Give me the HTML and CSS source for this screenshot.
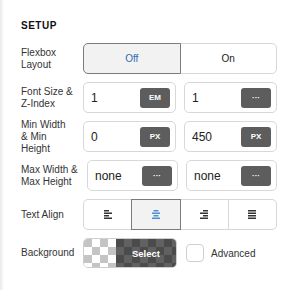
FILE: index.html
```html
<!DOCTYPE html>
<html lang="en">
<head>
    <meta charset="UTF-8">
    <meta name="viewport" content="width=device-width, initial-scale=1.0">
    <title>Setup</title>
    <link rel="stylesheet" href="styles.css">
</head>
<body>
    <div class="panel">
        <h2 class="section-title">Setup</h2>

        <div class="row">
            <div class="label">Flexbox Layout</div>
            <div class="segmented">
                <button class="seg active">Off</button>
                <button class="seg">On</button>
            </div>
        </div>

        <div class="row">
            <div class="label">Font Size &amp; Z-Index</div>
            <div class="fields">
                <div class="field"><span class="value">1</span><span class="unit">EM</span></div>
                <div class="field"><span class="value">1</span><span class="unit">&middot;&middot;&middot;</span></div>
            </div>
        </div>

        <div class="row">
            <div class="label">Min Width &amp; Min Height</div>
            <div class="fields">
                <div class="field"><span class="value">0</span><span class="unit">PX</span></div>
                <div class="field"><span class="value">450</span><span class="unit">PX</span></div>
            </div>
        </div>

        <div class="row">
            <div class="label label-wide">Max Width &amp; Max Height</div>
            <div class="fields">
                <div class="field"><span class="value">none</span><span class="unit">&middot;&middot;&middot;</span></div>
                <div class="field"><span class="value">none</span><span class="unit">&middot;&middot;&middot;</span></div>
            </div>
        </div>

        <div class="row">
            <div class="label">Text Align</div>
            <div class="segmented">
                <button class="seg">
                    <svg class="align-icon" width="8" height="9" viewBox="0 0 8 9">
                        <rect x="0" y="0" width="5" height="1.5"/>
                        <rect x="0" y="2.5" width="8" height="1.5"/>
                        <rect x="0" y="5" width="5" height="1.5"/>
                        <rect x="0" y="7.5" width="8" height="1.5"/>
                    </svg>
                </button>
                <button class="seg active">
                    <svg class="align-icon" width="8" height="9" viewBox="0 0 8 9">
                        <rect x="1.5" y="0" width="5" height="1.5"/>
                        <rect x="0" y="2.5" width="8" height="1.5"/>
                        <rect x="1.5" y="5" width="5" height="1.5"/>
                        <rect x="0" y="7.5" width="8" height="1.5"/>
                    </svg>
                </button>
                <button class="seg">
                    <svg class="align-icon" width="8" height="9" viewBox="0 0 8 9">
                        <rect x="3" y="0" width="5" height="1.5"/>
                        <rect x="0" y="2.5" width="8" height="1.5"/>
                        <rect x="3" y="5" width="5" height="1.5"/>
                        <rect x="0" y="7.5" width="8" height="1.5"/>
                    </svg>
                </button>
                <button class="seg">
                    <svg class="align-icon" width="8" height="9" viewBox="0 0 8 9">
                        <rect x="0" y="0" width="8" height="1.5"/>
                        <rect x="0" y="2.5" width="8" height="1.5"/>
                        <rect x="0" y="5" width="8" height="1.5"/>
                        <rect x="0" y="7.5" width="8" height="1.5"/>
                    </svg>
                </button>
            </div>
        </div>

        <div class="row row-last">
            <div class="label">Background</div>
            <div class="fields">
                <div class="bg-picker">
                    <div class="bg-preview"></div>
                    <div class="bg-select">Select</div>
                </div>
                <label class="advanced">
                    <span class="checkbox"></span>
                    <span>Advanced</span>
                </label>
            </div>
        </div>
    </div>
</body>
</html>
```

FILE: styles.css
```css
body {
    margin: 0;
    font-family: "Liberation Sans", Arial, sans-serif;
    color: #222;
    background: linear-gradient(to right, #e9e9e9, #fff 4px);
}
.panel {
    padding: 20px 12px 20px 21px;
}
.section-title {
    margin: 0 0 11px;
    font-size: 10px;
    line-height: 12px;
    font-weight: bold;
    letter-spacing: 0.5px;
    text-transform: uppercase;
    color: #111;
}
.row {
    display: flex;
    align-items: center;
    height: 31px;
    margin-bottom: 8px;
}
.row-last { height: 30px; }
.label {
    flex: 0 0 auto;
    width: 53px;
    margin-right: 9px;
    font-size: 10px;
    line-height: 12px;
    color: #333;
}
.label-wide {
    width: 58px;
    margin-right: 8px;
}
.segmented {
    flex: 1;
    display: flex;
    height: 100%;
}
.seg {
    flex: 1;
    margin: 0;
    padding: 0;
    background: #fff;
    border: 1px solid #d8d8d8;
    font-family: inherit;
    font-size: 10px;
    color: #222;
    display: flex;
    align-items: center;
    justify-content: center;
    cursor: pointer;
}
.seg + .seg { margin-left: -1px; }
.seg:first-child { border-radius: 5px 0 0 5px; }
.seg:last-child { border-radius: 0 5px 5px 0; }
.seg.active {
    background: #f2f2f2;
    border-color: #7b7b7b;
    color: #2f6db3;
    position: relative;
    z-index: 1;
}
.align-icon { fill: #333; }
.seg.active .align-icon { fill: #4a8fd6; }
.fields {
    flex: 1;
    display: flex;
    gap: 8px;
    height: 100%;
}
.field {
    flex: 1;
    display: flex;
    align-items: center;
    border: 1px solid #d8d8d8;
    border-radius: 5px;
    padding: 0 5px 0 7px;
}
.value {
    flex: 1;
    font-size: 12px;
    color: #222;
}
.unit {
    width: 30px;
    height: 20px;
    border-radius: 3px;
    background: #5d5d5d;
    color: #fff;
    font-size: 8px;
    font-weight: bold;
    display: flex;
    align-items: center;
    justify-content: center;
}
.bg-picker {
    flex: 1;
    display: flex;
    border: 1px solid #cfcfcf;
    border-radius: 5px;
    overflow: hidden;
}
.bg-preview {
    width: 32px;
    background: repeating-conic-gradient(#fff 0 25%, #c4c4c4 0 50%) 0 0 / 16px 16px;
}
.bg-select {
    flex: 1;
    display: flex;
    align-items: center;
    justify-content: center;
    color: #fff;
    font-size: 9.5px;
    font-weight: bold;
    background:
        linear-gradient(rgba(0, 0, 0, 0.62), rgba(0, 0, 0, 0.62)),
        repeating-conic-gradient(#fff 0 25%, #c4c4c4 0 50%) 0 0 / 16px 16px;
}
.advanced {
    flex: 1;
    display: flex;
    align-items: center;
    font-size: 10px;
    color: #333;
}
.checkbox {
    width: 16px;
    height: 16px;
    border: 1px solid #cfcfcf;
    border-radius: 4px;
    margin: 0 7px 0 1px;
}
```
